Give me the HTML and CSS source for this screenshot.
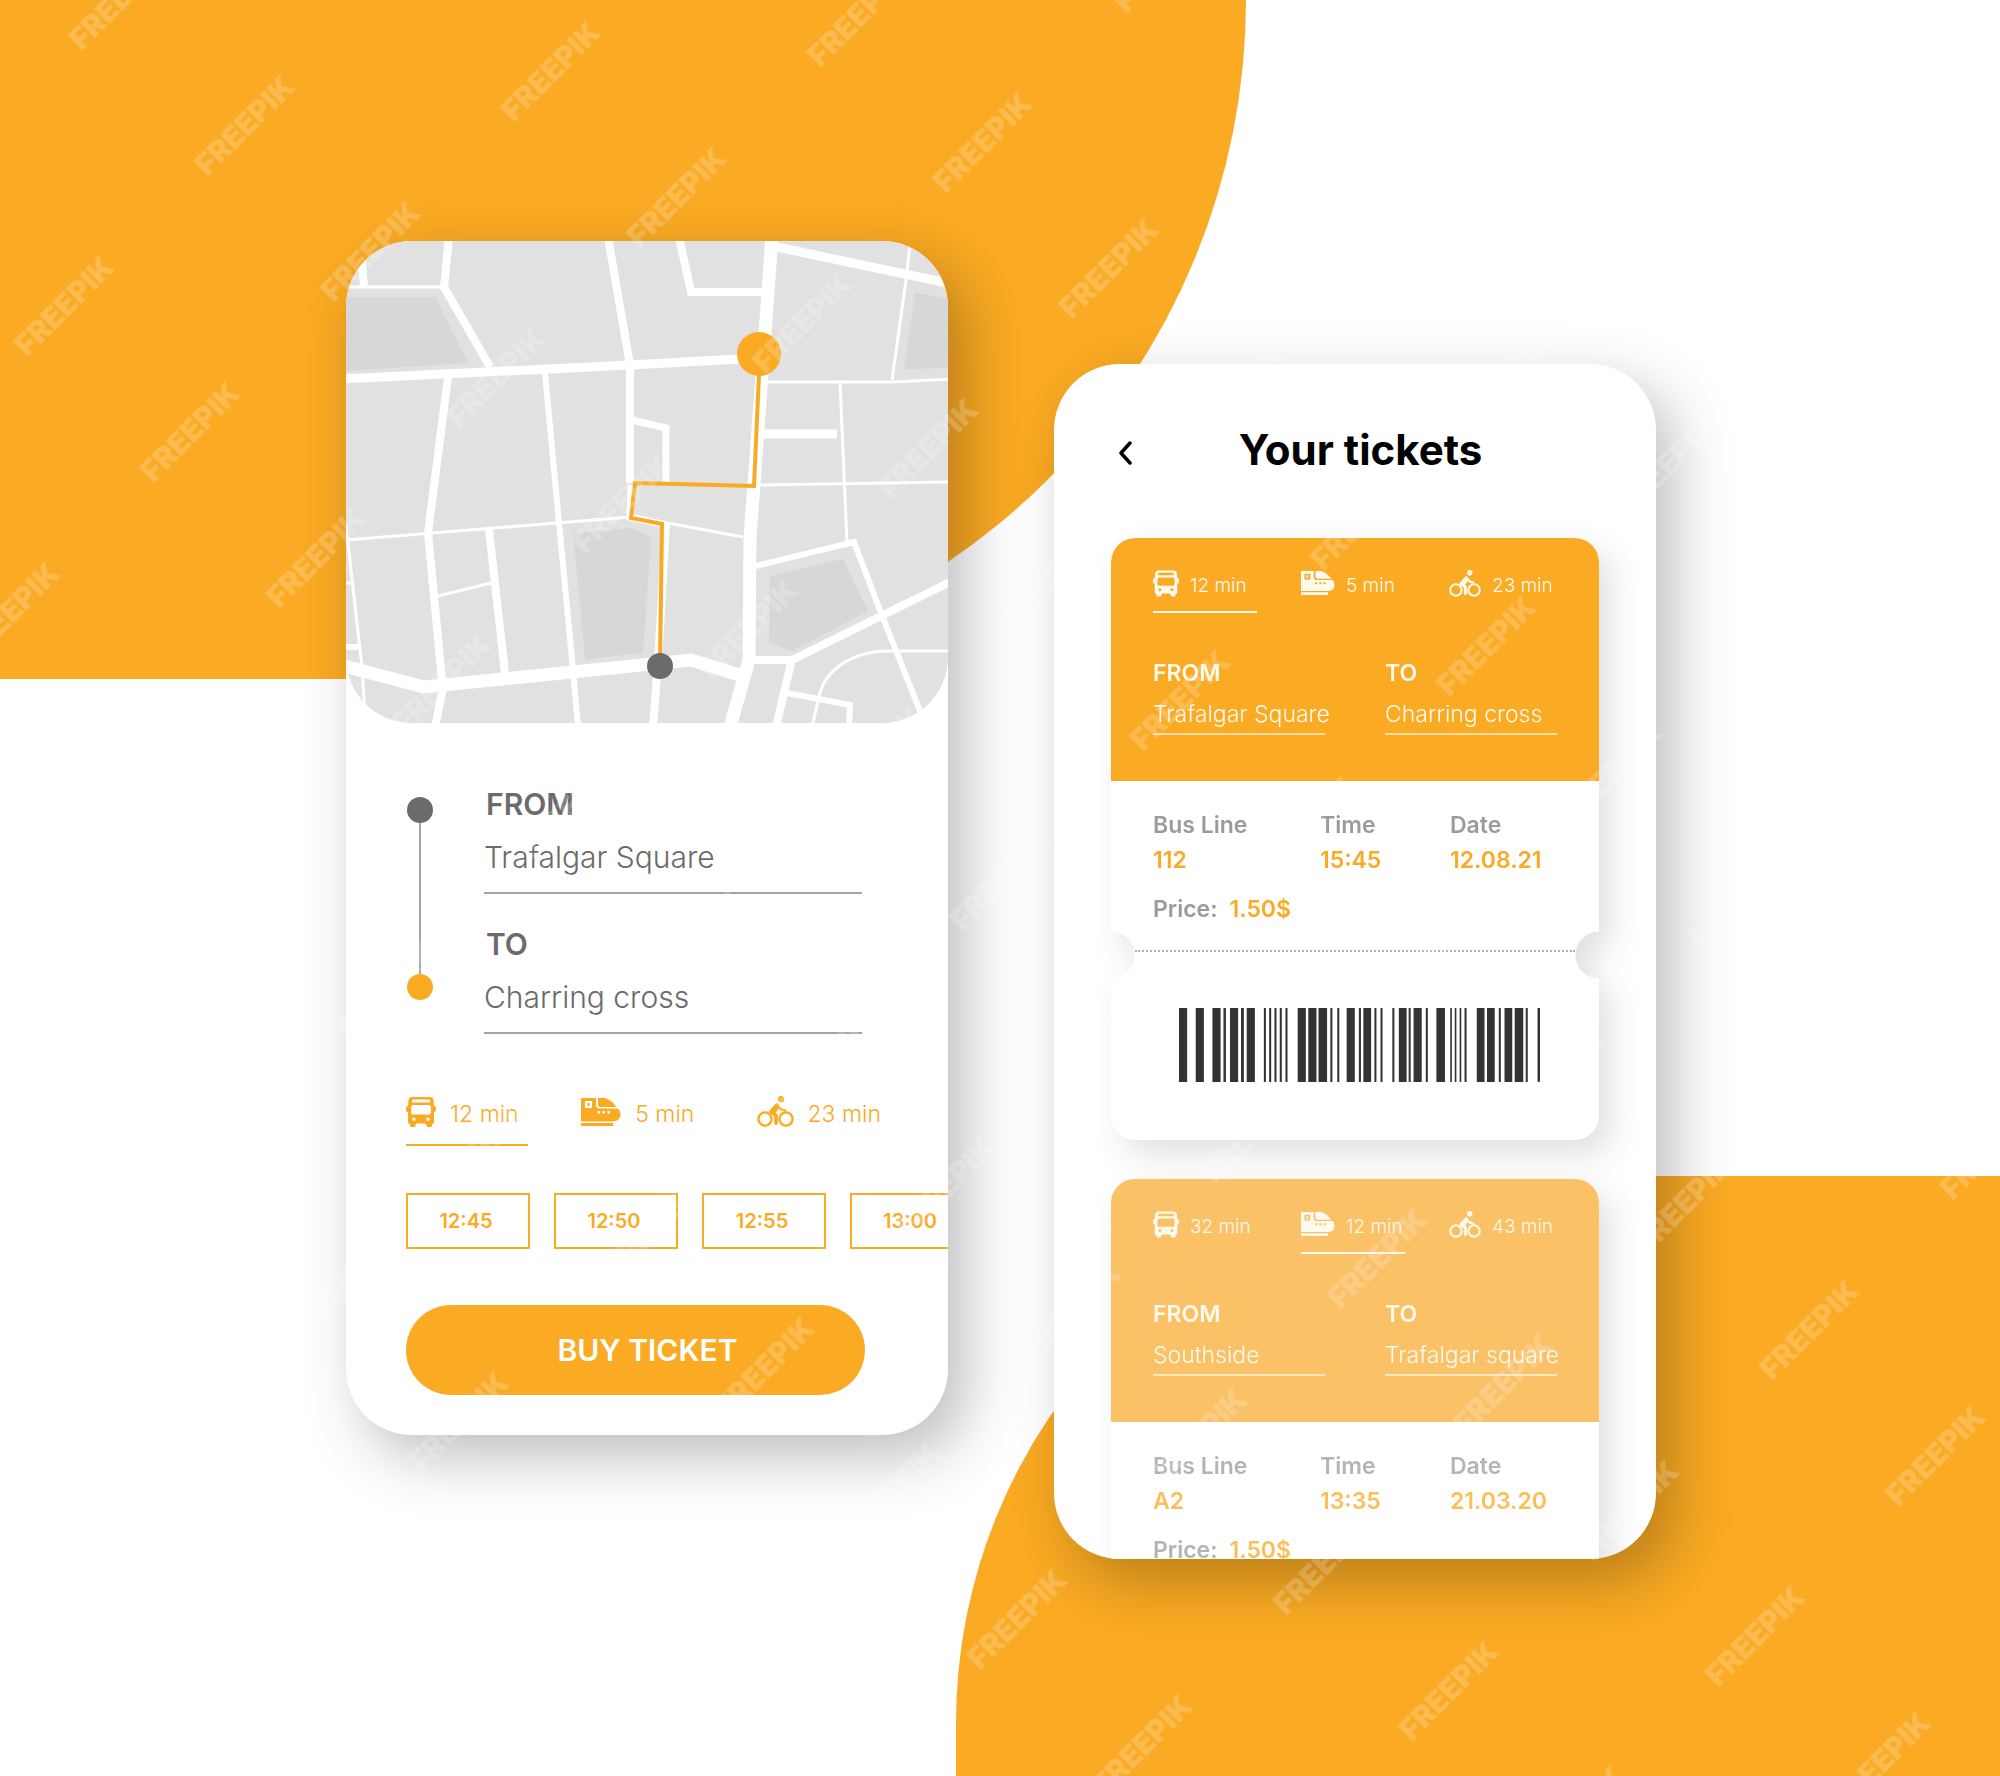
FILE: index.html
```html
<!DOCTYPE html>
<html lang="en">
<head>
<meta charset="utf-8">
<meta name="viewport" content="width=device-width, initial-scale=1">
<title>Your tickets</title>
<link rel="stylesheet" href="styles.css">
</head>
<body>
<svg class="sprite" aria-hidden="true">
  <symbol id="bus" viewBox="0 0 30 30">
    <path fill-rule="evenodd" d="M6 0H24Q27 0 27.500 3L28 9Q30 9 30 10.500V13.500Q30 15 28 15V25Q28 27 26 27V28.500Q26 30 24.500 30H22.500Q21 30 20.500 28.500L19.500 26.500H10.500L9.500 28.500Q9 30 7.500 30H5.500Q4 30 4 28.500V27Q2 27 2 25V15Q0 15 0 13.500V10.500Q0 9 2 9L2.500 3Q3 0 6 0ZM7 2.500Q6 2.500 6 3.500V4.500Q6 5.500 7 5.500H23Q24 5.500 24 4.500V3.500Q24 2.500 23 2.500ZM7 8Q5.500 8 5.300 9.500L5 15.500Q5 17.500 7 17.500H23Q25 17.500 25 15.500L24.700 9.500Q24.500 8 23 8ZM8 20.500A1.700 1.700 0 1 0 8 23.900A1.700 1.700 0 1 0 8 20.500ZM22 20.500A1.700 1.700 0 1 0 22 23.900A1.700 1.700 0 1 0 22 20.500Z"/>
  </symbol>
  <symbol id="train" viewBox="0 0 40 28">
    <path fill-rule="evenodd" d="M0 0H15V6.500Q15 10.500 19 10.500H37Q39.500 13 39.500 16Q39.500 23.500 31 23.500H0ZM4 3V10H11V3ZM16.500 13V15.500H19V13ZM21.500 13V15.500H24V13ZM26.500 13V15.500H29V13Z"/>
    <path d="M6.500 5H8.500V8H6.500ZM17 0H24Q31 2.500 35.500 9H19.500Q17 9 17 6.500ZM0 25H32V28H0Z"/>
  </symbol>
  <symbol id="bike" viewBox="0 0 37 31">
    <g fill="none" stroke="currentColor">
      <circle cx="8" cy="23" r="6.600" stroke-width="2.400"/>
      <circle cx="29" cy="23" r="6.600" stroke-width="2.400"/>
      <path d="M20 9L14 15.500L19 19.500V27" stroke-width="3.800" stroke-linejoin="round" stroke-linecap="round"/>
      <path d="M20 9L23.500 13L28 14.500" stroke-width="2.600" stroke-linejoin="round" stroke-linecap="round"/>
      <path d="M21 10L17 16" stroke-width="4"/>
    </g>
    <circle cx="24" cy="3.200" r="3.200"/>
  </symbol>
  <symbol id="barcode" viewBox="0 0 885 74" preserveAspectRatio="none">
    <path d="M0 0h20v74h-20zM41 0h20v74h-20zM82 0h20v74h-20zM109 0h6v74h-6zM125 0h20v74h-20zM152 0h7v74h-7zM166 0h20v74h-20zM208 0h5v74h-5zM221 0h5v74h-5zM234 0h5v74h-5zM247 0h5v74h-5zM261 0h5v74h-5zM291 0h20v74h-20zM317 0h20v74h-20zM342 0h21v74h-21zM371 0h5v74h-5zM388 0h5v74h-5zM411 0h20v74h-20zM441 0h5v74h-5zM452 0h19v74h-19zM479 0h5v74h-5zM494 0h5v74h-5zM523 0h5v74h-5zM539 0h19v74h-19zM563 0h5v74h-5zM575 0h20v74h-20zM605 0h5v74h-5zM631 0h21v74h-21zM665 0h4v74h-4zM676 0h4v74h-4zM688 0h4v74h-4zM700 0h5v74h-5zM730 0h19v74h-19zM755 0h19v74h-19zM784 0h5v74h-5zM798 0h19v74h-19zM823 0h21v74h-21zM850 0h5v74h-5zM879 0h6v74h-6z"/>
  </symbol>
</svg>

<div class="backdrop" aria-hidden="true">
  <div class="blob blob-top"></div>
  <div class="blob blob-bottom"></div>
</div>

<main class="screens">
  <section class="phone planner" aria-label="Plan a trip">
    <svg class="map" viewBox="0 0 602 482" preserveAspectRatio="xMidYMid slice" role="img" aria-label="Route map">
      <rect width="602" height="482" fill="#e1e1e1"/>
      <g fill="#d7d7d7">
        <path d="M0 56H89L122 122L0 130Z"/>
        <path d="M569 52L602 57V127L558 128Z"/>
        <path d="M227 292L286 287L305 297L297 412L239 418Z"/>
        <path d="M424 335L497 318L522 370L447 410L423 402Z"/>
      </g>
      <g fill="none" stroke="#fff">
        <path stroke-width="13" d="M426 -4L419 92L408 243L404 296L403 419L384 486M-6 424L78 446L345 419L400 436"/>
        <path stroke-width="9" d="M-5 138L284 124L412 117M418 193H491M426 5L606 43"/>
        <path stroke-width="8" d="M103 -4L98 46L144 126M15 10L18 46M262 -4L284 124V242M333 -4L345 51H416M102 136L82 292L96 439M97 447L89 486M143 289L159 432M320 282L312 422L307 486M406 419H446L606 340M445 422L430 486"/>
        <path stroke-width="7" d="M286 179L320 187V242M285 244L284 276L320 284"/>
        <path stroke-width="6" d="M410 325L508 301L537 377L576 475M199 132L213 282L227 429L232 486M441 452L504 464L503 486M0 406H13"/>
        <path stroke-width="3" d="M0 46H98M564 4L560 39L546 139M422 141H546L606 138M494 141L501 301M414 244L606 241M0 299L284 276M316 281L397 296M92 355L145 342M0 285L16 426L19 474M0 342H7M606 410H543C505 410 478 430 473 456L466 486"/>
      </g>
      <path fill="none" stroke="#f9aa24" stroke-width="4" d="M413 134L408 245L289 242L285 277L316 283L314 422"/>
      <circle cx="413" cy="113" r="22" fill="#faaa23"/>
      <circle cx="314" cy="425" r="13" fill="#6d6a6b"/>
    </svg>

    <form class="planner-form">
      <div class="trip">
        <div class="rail" aria-hidden="true"><i class="dot"></i><i class="rail-line"></i><i class="dot dot-end"></i></div>
        <div class="fields">
          <div class="field">
            <label for="from">FROM</label>
            <input id="from" type="text" value="Trafalgar Square">
          </div>
          <div class="field">
            <label for="to">TO</label>
            <input id="to" type="text" value="Charring cross">
          </div>
        </div>
      </div>

      <div class="modes modes-large">
        <button class="mode active" type="button"><svg class="icon-bus"><use href="#bus"/></svg>12 min</button>
        <button class="mode" type="button"><svg class="icon-train"><use href="#train"/></svg>5 min</button>
        <button class="mode" type="button"><svg class="icon-bike"><use href="#bike"/></svg>23 min</button>
      </div>

      <div class="times">
        <button class="time" type="button">12:45</button>
        <button class="time" type="button">12:50</button>
        <button class="time" type="button">12:55</button>
        <button class="time" type="button">13:00</button>
      </div>

      <button class="buy" type="submit">BUY TICKET</button>
    </form>
  </section>

  <section class="phone wallet" aria-labelledby="wallet-title">
    <header class="wallet-header">
      <button class="back" type="button" aria-label="Back">
        <svg viewBox="0 0 14 24"><path d="M12 2L3 12L12 22" fill="none" stroke="#000" stroke-width="3.500" stroke-linecap="round" stroke-linejoin="round"/></svg>
      </button>
      <h1 id="wallet-title">Your tickets</h1>
    </header>

    <div class="tickets">
      <article class="ticket">
        <div class="ticket-shape">
          <div class="ticket-top">
            <div class="modes">
              <button class="mode active" type="button"><svg class="icon-bus"><use href="#bus"/></svg>12 min</button>
              <button class="mode" type="button"><svg class="icon-train"><use href="#train"/></svg>5 min</button>
              <button class="mode" type="button"><svg class="icon-bike"><use href="#bike"/></svg>23 min</button>
            </div>
            <dl class="stops">
              <div><dt>FROM</dt><dd>Trafalgar Square</dd></div>
              <div><dt>TO</dt><dd>Charring cross</dd></div>
            </dl>
          </div>
          <dl class="details">
            <div><dt>Bus Line</dt><dd>112</dd></div>
            <div><dt>Time</dt><dd>15:45</dd></div>
            <div><dt>Date</dt><dd>12.08.21</dd></div>
            <div class="price"><dt>Price:</dt><dd>1.50$</dd></div>
          </dl>
          <div class="stub">
            <svg class="barcode" role="img" aria-label="Barcode"><use href="#barcode"/></svg>
          </div>
        </div>
      </article>

      <article class="ticket ticket-used">
        <div class="ticket-shape">
          <div class="ticket-top">
            <div class="modes">
              <button class="mode" type="button"><svg class="icon-bus"><use href="#bus"/></svg>32 min</button>
              <button class="mode active" type="button"><svg class="icon-train"><use href="#train"/></svg>12 min</button>
              <button class="mode" type="button"><svg class="icon-bike"><use href="#bike"/></svg>43 min</button>
            </div>
            <dl class="stops">
              <div><dt>FROM</dt><dd>Southside</dd></div>
              <div><dt>TO</dt><dd>Trafalgar square</dd></div>
            </dl>
          </div>
          <dl class="details">
            <div><dt>Bus Line</dt><dd>A2</dd></div>
            <div><dt>Time</dt><dd>13:35</dd></div>
            <div><dt>Date</dt><dd>21.03.20</dd></div>
            <div class="price"><dt>Price:</dt><dd>1.50$</dd></div>
          </dl>
        </div>
      </article>
    </div>
  </section>
</main>

<svg class="watermark" aria-hidden="true">
  <defs>
    <pattern id="marks" width="255" height="178" patternUnits="userSpaceOnUse" patternTransform="translate(245 126) rotate(-45) translate(-127 -89)">
      <text x="127" y="99" text-anchor="middle">FREEPIK</text>
    </pattern>
  </defs>
  <rect width="100%" height="100%" fill="url(#marks)"/>
</svg>
</body>
</html>
```
FILE: styles.css
```css
:root {
  --orange: #faaa23;
  --grey: #6d6a6b;
  --label: #9b9b9b;
}

*,
*::before,
*::after {
  box-sizing: border-box;
}

body {
  position: relative;
  margin: 0;
  min-height: 100vh;
  background: #fff;
  font-family: Inter, "Liberation Sans", sans-serif;
  overflow-x: hidden;
}

button,
input {
  margin: 0;
  padding: 0;
  border: 0;
  background: none;
  color: inherit;
  font: inherit;
}

button {
  cursor: pointer;
}

dl,
dd,
h1 {
  margin: 0;
}

svg {
  display: block;
  fill: currentColor;
}

.sprite {
  position: absolute;
  width: 0;
  height: 0;
}

/* Background shapes and overlay */
.backdrop {
  position: absolute;
  inset: 0;
  z-index: -1;
  overflow: hidden;
}

.blob {
  position: absolute;
  background: var(--orange);
}

.blob-top {
  top: 0;
  left: 0;
  width: 62.3%;
  height: 679px;
  border-bottom-right-radius: 679px;
}

.blob-bottom {
  right: 0;
  bottom: 0;
  width: 52.2%;
  height: 600px;
  border-top-left-radius: 547px;
}

.watermark {
  position: absolute;
  inset: 0;
  width: 100%;
  height: 100%;
  pointer-events: none;
}

.watermark text {
  fill: rgba(255, 255, 255, 0.2);
  font-size: 30px;
  font-weight: 900;
}

/* Phones */
.screens {
  display: flex;
  justify-content: center;
  align-items: flex-start;
  gap: 106px;
  padding: 241px 40px 200px 42px;
}

.phone {
  flex: 0 1 602px;
  min-width: 0;
  overflow: hidden;
  border-radius: 66px;
  background: #fff;
  box-shadow: 18px 22px 60px rgba(0, 0, 0, 0.26);
}

.map {
  width: 100%;
  border-radius: 66px;
}

/* Planner */
.planner-form {
  padding: 65px 0 40px 60px;
}

.trip {
  display: flex;
  gap: 50px;
  margin-right: 86px;
}

.rail {
  display: flex;
  flex: none;
  flex-direction: column;
  align-items: center;
  width: 28px;
  padding: 9px 0 34px;
}

.dot {
  width: 26px;
  height: 26px;
  border-radius: 50%;
  background: var(--grey);
}

.dot-end {
  background: var(--orange);
}

.rail-line {
  flex: 1;
  width: 2px;
  background: #a3a3a3;
}

.fields {
  display: grid;
  flex: 1;
  gap: 34px;
  color: var(--grey);
  font-size: 30px;
}

.field label {
  display: block;
  padding-left: 2px;
  line-height: 32px;
  font-weight: 600;
}

.field input {
  display: block;
  width: 100%;
  height: 55px;
  margin-top: 19px;
  padding-bottom: 17px;
  border-bottom: 2px solid #a3a3a3;
  font-weight: 300;
}

.modes {
  display: grid;
  grid-template-columns: repeat(3, 1fr);
  gap: 44px;
  margin-right: 4px;
  font-size: 19px;
  font-weight: 300;
}

.mode {
  display: flex;
  align-items: center;
  gap: 11px;
  height: 45px;
  padding-bottom: 9px;
  border-bottom: 2px solid transparent;
  white-space: nowrap;
}

.mode.active {
  border-bottom-color: currentColor;
}

.mode svg {
  flex: none;
  margin-bottom: 4px;
}

.icon-bus {
  width: 26px;
  height: 27px;
}

.icon-train {
  width: 34px;
  height: 24px;
}

.icon-bike {
  width: 32px;
  height: 27px;
}

.modes-large {
  gap: 53px;
  margin: 60px 67px 0 0;
  color: var(--orange);
  font-size: 23px;
}

.modes-large .mode {
  gap: 14px;
  height: 52px;
  padding-bottom: 11px;
}

.modes-large .icon-bus {
  width: 30px;
  height: 30px;
}

.modes-large .icon-train {
  width: 40px;
  height: 28px;
}

.modes-large .icon-bike {
  width: 37px;
  height: 31px;
}

.times {
  display: flex;
  gap: 24px;
  margin-top: 47px;
  overflow: hidden;
}

.time {
  flex: none;
  width: 124px;
  height: 56px;
  padding-right: 4px;
  border: 2px solid var(--orange);
  color: var(--orange);
  font-size: 20px;
  font-weight: 600;
}

.buy {
  display: block;
  width: calc(100% - 83px);
  height: 90px;
  margin-top: 56px;
  padding-left: 24px;
  border-radius: 45px;
  background: var(--orange);
  color: #fff;
  font-size: 30px;
  font-weight: 600;
}

/* Wallet */
.wallet {
  aspect-ratio: 602 / 1195;
  min-height: 0;
  margin-top: 123px;
}

.wallet-header {
  display: grid;
  grid-template-columns: 14px 1fr 14px;
  align-items: center;
  padding: 60px 53px 0 64px;
}

.back {
  padding-top: 6px;
}

.back svg {
  width: 14px;
  height: 24px;
}

.wallet-header h1 {
  font-size: 42px;
  font-weight: 700;
  line-height: 52px;
  text-align: center;
}

.tickets {
  display: grid;
  gap: 39px;
  padding: 62px 57px 0;
}

.ticket {
  filter: drop-shadow(12px 14px 16px rgba(0, 0, 0, 0.12));
}

.ticket-shape {
  overflow: hidden;
  border-radius: 24px;
  background: #fff;
  -webkit-mask-image: radial-gradient(circle at 0 calc(100% - 185px), transparent 23px, #000 24px), radial-gradient(circle at 100% calc(100% - 185px), transparent 23px, #000 24px);
  -webkit-mask-composite: source-in;
  mask-image: radial-gradient(circle at 0 calc(100% - 185px), transparent 23px, #000 24px), radial-gradient(circle at 100% calc(100% - 185px), transparent 23px, #000 24px);
  mask-composite: intersect;
}

.ticket-top {
  padding: 30px 42px 46px;
  background: var(--orange);
  color: #fffaf0;
}

.stops {
  display: grid;
  grid-template-columns: 1fr 1fr;
  gap: 60px;
  margin-top: 48px;
  font-size: 23px;
  white-space: nowrap;
}

.stops dt {
  font-weight: 600;
  line-height: 24px;
}

.stops dd {
  width: 172px;
  margin-top: 16px;
  padding-bottom: 6px;
  border-bottom: 2px solid rgba(255, 255, 255, 0.6);
  font-weight: 300;
  line-height: 26px;
}

.details {
  display: grid;
  grid-template-columns: 167px 130px 1fr;
  row-gap: 23px;
  padding: 31px 0 28px 42px;
  font-size: 23px;
  font-weight: 600;
  line-height: 26px;
}

.details dt {
  color: var(--label);
}

.details dd {
  margin-top: 9px;
  color: var(--orange);
}

.details .price {
  display: flex;
  grid-column: 1 / -1;
  gap: 12px;
}

.details .price dd {
  margin: 0;
}

.stub {
  margin: 0 24px;
  padding: 56px 35px 58px 44px;
  border-top: 2px dotted #b0b0b0;
}

.barcode {
  width: 100%;
  height: 74px;
  color: #333;
}

.ticket-used .ticket-shape {
  -webkit-mask-image: none;
  mask-image: none;
}

.ticket-used .ticket-top {
  background: #fbc166;
}

.ticket-used .details dt,
.ticket-used .details dd {
  opacity: 0.75;
}

.ticket-used .details {
  padding-bottom: 80px;
}

@media (max-width: 1100px) {
  .screens {
    flex-direction: column;
    align-items: center;
    padding: 80px 20px;
  }

  .phone {
    flex: none;
    width: 100%;
    max-width: 602px;
  }

  .wallet {
    margin-top: 0;
  }
}
```
